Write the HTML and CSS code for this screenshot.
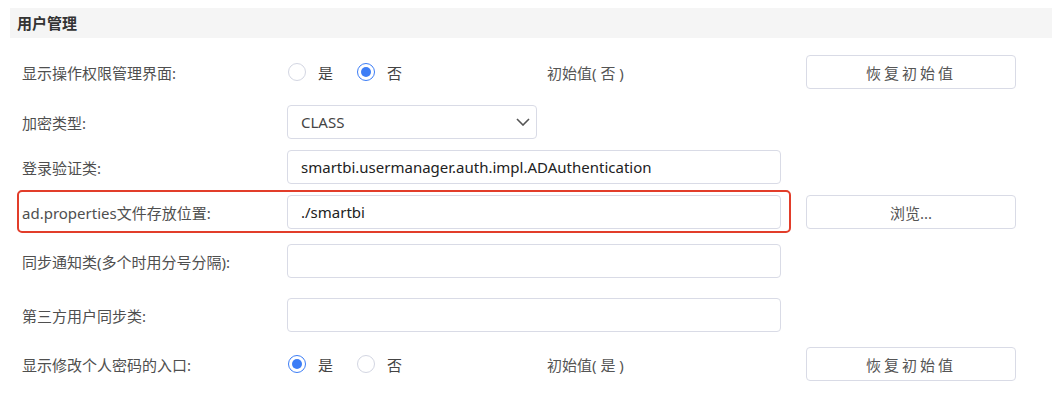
FILE: index.html
```html
<!DOCTYPE html>
<html lang="zh-CN">
<head>
  <meta charset="UTF-8" />
  <title>用户管理</title>
  <link rel="stylesheet" href="styles.css">
</head>
<body>
  <div class="section-title">用户管理</div>

  <div class="form">
    <div class="row row-1">
      <div class="main">
        <label class="field-label">显示操作权限管理界面:</label>
        <div class="radios">
          <span class="radio"><span class="dot"></span>是</span>
          <span class="radio"><span class="dot checked"></span>否</span>
          <span class="initial">初始值( 否 )</span>
        </div>
      </div>
      <button class="btn btn-spaced">恢复初始值</button>
    </div>

    <div class="row row-2">
      <div class="main">
        <label class="field-label">加密类型:</label>
        <div class="select">
          <span>CLASS</span>
          <svg class="chevron" width="14" height="8" viewBox="0 0 14 8">
            <polyline points="1,1 7,7 13,1" fill="none" stroke="#555" stroke-width="1.6" />
          </svg>
        </div>
      </div>
    </div>

    <div class="row row-3">
      <div class="main">
        <label class="field-label">登录验证类:</label>
        <input class="text-input" type="text" value="smartbi.usermanager.auth.impl.ADAuthentication">
      </div>
    </div>

    <div class="row row-4">
      <div class="main highlighted">
        <label class="field-label">ad.properties文件存放位置:</label>
        <input class="text-input" type="text" value="./smartbi">
      </div>
      <button class="btn">浏览...</button>
    </div>

    <div class="row row-5">
      <div class="main">
        <label class="field-label">同步通知类(多个时用分号分隔):</label>
        <input class="text-input" type="text" value="">
      </div>
    </div>

    <div class="row row-6">
      <div class="main">
        <label class="field-label">第三方用户同步类:</label>
        <input class="text-input" type="text" value="">
      </div>
    </div>

    <div class="row row-7">
      <div class="main">
        <label class="field-label">显示修改个人密码的入口:</label>
        <div class="radios">
          <span class="radio"><span class="dot checked"></span>是</span>
          <span class="radio"><span class="dot"></span>否</span>
          <span class="initial">初始值( 是 )</span>
        </div>
      </div>
      <button class="btn btn-spaced">恢复初始值</button>
    </div>
  </div>
</body>
</html>
```

FILE: styles.css
```css
* {
  box-sizing: border-box;
}
html, body {
  margin: 0;
  padding: 0;
  background: #fff;
  font-family: "Noto Sans", "Noto Sans CJK SC", sans-serif;
  font-size: 15px;
  color: #555;
  overflow: hidden;
}
body {
  padding: 8px 12px 0 10px;
}
.section-title {
  height: 30px;
  line-height: 30px;
  padding-left: 7px;
  background: #f5f5f5;
  font-weight: bold;
  font-size: 15px;
  color: #333;
}
.form {
  padding-left: 12px;
}
.row {
  display: flex;
  align-items: center;
  height: 34px;
  gap: 25px;
}
.row-1 { margin-top: 17px; }
.row-2 { margin-top: 16px; }
.row-3 { margin-top: 11px; }
.row-4 { margin-top: 11px; }
.row-5 { margin-top: 15px; }
.row-6 { margin-top: 20px; }
.row-7 { margin-top: 15px; }

.main {
  position: relative;
  display: flex;
  align-items: center;
  width: 759px;
  height: 34px;
}
/* red highlight frame around the field */
.main.highlighted::after {
  content: "";
  position: absolute;
  left: -5px;
  right: -10px;
  top: -5px;
  bottom: -4px;
  border: 2px solid #e23d2a;
  border-radius: 5px;
}
.field-label {
  width: 265px;
  flex-shrink: 0;
  color: #4f4f4f;
  white-space: nowrap;
}
.text-input {
  width: 494px;
  height: 34px;
  padding: 0 13px;
  border: 1px solid #d9dbe6;
  border-radius: 4px;
  font-family: inherit;
  font-size: 15px;
  color: #222;
  outline: none;
}
.select {
  width: 250px;
  height: 34px;
  padding: 0 6px 0 13px;
  border: 1px solid #d9dbe6;
  border-radius: 4px;
  display: flex;
  align-items: center;
  justify-content: space-between;
  color: #444;
}
.radios {
  display: flex;
  align-items: center;
  padding-left: 1px;
}
.radio {
  display: flex;
  align-items: center;
  gap: 12px;
  margin-right: 24px;
  color: #444;
}
.dot {
  width: 18px;
  height: 18px;
  border-radius: 50%;
  border: 1px solid #d3d6e2;
  display: flex;
  align-items: center;
  justify-content: center;
}
.dot.checked {
  border: 1.5px solid #3c7df6;
}
.dot.checked::after {
  content: "";
  width: 10px;
  height: 10px;
  border-radius: 50%;
  background: #3c7df6;
}
.initial {
  margin-left: 121px;
  color: #555;
}
.btn {
  width: 210px;
  height: 34px;
  border: 1px solid #d9dbe6;
  border-radius: 4px;
  background: #fff;
  font-family: inherit;
  font-size: 15px;
  color: #555;
  cursor: pointer;
}
.btn-spaced {
  letter-spacing: 3px;
}
```
